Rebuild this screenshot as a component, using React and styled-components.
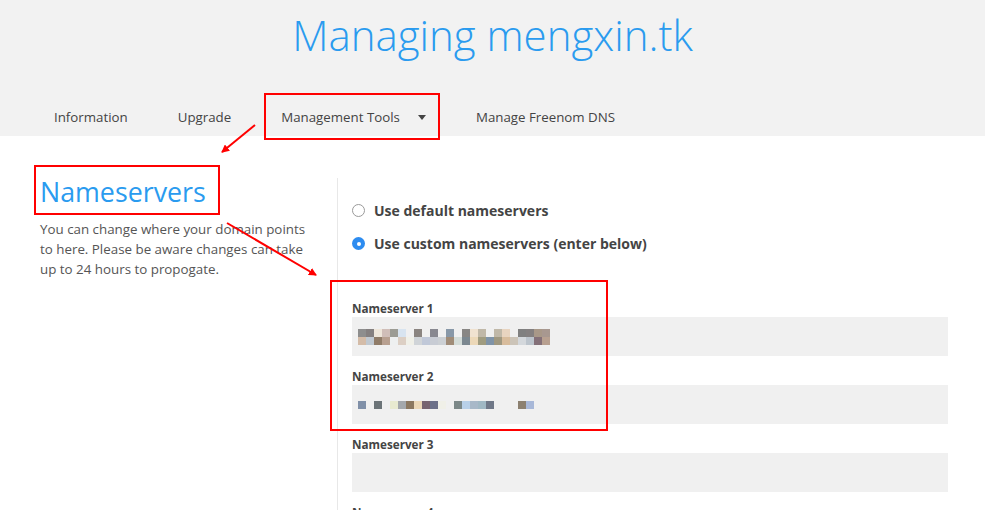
import React from "react";
import styled, { createGlobalStyle } from "styled-components";

const GlobalStyle = createGlobalStyle`
    html, body {
        margin: 0;
        padding: 0;
        background: #fff;
        font-family: "Open Sans", "Noto Sans", sans-serif;
        color: #555;
    }
`;

const Page = styled.div`
    position: relative;
    width: 985px;
    height: 510px;
    overflow: hidden;
`;

const Header = styled.header`
    background-color: #f2f2f2;
    height: 136px;
    display: flex;
    flex-direction: column;
`;

const Title = styled.h1`
    margin: 5px 0 0;
    text-align: center;
    font-size: 42px;
    font-weight: 300;
    line-height: 60px;
    color: #2a9bef;
`;

const Nav = styled.nav`
    display: flex;
    align-items: center;
    margin-top: auto;
    height: 38px;
    padding: 0 0 0 29px;
`;

const NavItem = styled.a`
    display: flex;
    align-items: center;
    padding: 0 25px;
    font-size: 13.3px;
    color: #444;
    text-decoration: none;
    white-space: nowrap;
`;

const Caret = styled.span`
    margin-left: 18px;
    width: 0;
    height: 0;
    border-left: 4.5px solid transparent;
    border-right: 4.5px solid transparent;
    border-top: 5px solid #444;
`;

const Main = styled.main`
    display: flex;
    padding: 42px 37px 0 0;
`;

const Side = styled.aside`
    width: 337px;
    flex-shrink: 0;
    padding-left: 40px;
    box-sizing: border-box;
`;

const SectionTitle = styled.h2`
    margin: -5px 0 0;
    font-size: 26.8px;
    font-weight: 400;
    line-height: 38px;
    color: #2a9bef;
`;

const Intro = styled.p`
    margin: 8px 0 0;
    width: 275px;
    font-size: 13.35px;
    line-height: 20px;
    color: #555;
`;

const Content = styled.section`
    flex: 1;
    border-left: 1px solid #e8e8e8;
    padding: 16px 0 0 14px;
    min-height: 340px;
`;

const RadioRow = styled.label`
    display: flex;
    align-items: center;
    height: 33px;
    font-size: 14px;
    font-weight: 700;
    color: #444;
`;

const Radio = styled.span`
    width: 13px;
    height: 13px;
    box-sizing: border-box;
    border-radius: 50%;
    margin-right: 9px;
    border: ${p => (p.checked ? "none" : "1px solid #9a9a9a")};
    background: ${p => (p.checked ? "#2d8cf0" : "#fff")};
    display: flex;
    align-items: center;
    justify-content: center;

    &::after {
        content: "";
        display: ${p => (p.checked ? "block" : "none")};
        width: 4px;
        height: 4px;
        border-radius: 50%;
        background: #fff;
    }
`;

const Fields = styled.div`
    margin-top: 41px;
    display: flex;
    flex-direction: column;
    gap: 13px;
`;

const Field = styled.div`
    display: flex;
    flex-direction: column;
`;

const FieldLabel = styled.span`
    font-size: 11.7px;
    font-weight: 700;
    line-height: 14px;
    color: #444;
    margin-bottom: 2px;
`;

const Input = styled.div`
    height: 39px;
    background: #f0f0f0;
    display: flex;
    align-items: center;
    padding-left: 6px;
`;

const Overlay = styled.svg`
    position: absolute;
    top: 0;
    left: 0;
    pointer-events: none;
`;

const ns1Top = [
    "#8e8e8e", "#858080", "#eee6da", "#d0beb8", "#9c9c94", "#d8e4f0", null, "#8a8480", null, "#888890",
    null, "#8898a8", null, "#888684", "#f0e2d0", "#c0b8a8", null, "#c0b8a8", "#e8d4c0", null,
    "#808080", "#848080", "#a89888", "#a89890",
];
const ns1Bottom = [
    "#d4bca8", "#c0c8d0", "#907c68", "#b8a090", "#eef0f0", "#dccfc4", "#f0f0e8", "#d0d4d8", "#c0c8d8", "#c8ccd4",
    "#ccd0d4", "#a08c78", "#d4dcd8", "#7c8890", "#ecd8b8", "#a09c80", "#8094a8", "#a09880", "#d8bc9c", "#ccc4b8",
    "#d4d8dc", "#bcc4cc", "#847078", "#b8a090",
];
const ns2Row = [
    "#8090a8", null, "#6c7478", null, "#e8ead0", "#a4a8ac", "#8c7860", "#ecd8b8", "#786470", "#6c7088",
    "#f0f0e8", null, "#7c8888", "#b8d0e8", "#a8b8c8", "#a0b8c4", "#707888", null, null, null,
    "#8c8070", "#a8b8d8",
];

// pixelated (censored) server names
const Blur = ({ rows }) => (
    <svg width="192" height={rows.length * 8} aria-hidden="true">
        {rows.map((row, r) =>
            row.map((c, i) =>
                c ? <rect key={r + "-" + i} x={i * 8} y={r * 8} width="8" height="8" fill={c} /> : null
            )
        )}
    </svg>
);

const Annotations = () => (
    <Overlay width="985" height="510" viewBox="0 0 985 510">
        <defs>
            <marker id="head" markerWidth="8" markerHeight="8" refX="7" refY="4" orient="auto" markerUnits="userSpaceOnUse">
                <path d="M0,0 L8,4 L0,8 Z" fill="#f00" />
            </marker>
        </defs>
        <g fill="none" stroke="#f00" strokeWidth="2">
            <rect x="265" y="94" width="174" height="45" />
            <rect x="35" y="166" width="184" height="48" />
            <rect x="331" y="281" width="276" height="149" />
            <line x1="255" y1="125" x2="222" y2="152" markerEnd="url(#head)" />
            <line x1="227" y1="223" x2="316" y2="275" markerEnd="url(#head)" />
        </g>
    </Overlay>
);

const App = () => {
    return (
        <Page>
            <GlobalStyle />
            <Header>
                <Title>Managing mengxin.tk</Title>
                <Nav>
                    <NavItem href="#">Information</NavItem>
                    <NavItem href="#">Upgrade</NavItem>
                    <NavItem href="#">Management Tools<Caret /></NavItem>
                    <NavItem href="#">Manage Freenom DNS</NavItem>
                </Nav>
            </Header>
            <Main>
                <Side>
                    <SectionTitle>Nameservers</SectionTitle>
                    <Intro>
                        You can change where your domain points to here. Please be aware changes can take up to 24 hours to propogate.
                    </Intro>
                </Side>
                <Content>
                    <RadioRow><Radio />Use default nameservers</RadioRow>
                    <RadioRow><Radio checked />Use custom nameservers (enter below)</RadioRow>
                    <Fields>
                        <Field>
                            <FieldLabel>Nameserver 1</FieldLabel>
                            <Input><Blur rows={[ns1Top, ns1Bottom]} /></Input>
                        </Field>
                        <Field>
                            <FieldLabel>Nameserver 2</FieldLabel>
                            <Input><Blur rows={[ns2Row]} /></Input>
                        </Field>
                        <Field>
                            <FieldLabel>Nameserver 3</FieldLabel>
                            <Input />
                        </Field>
                        <Field>
                            <FieldLabel>Nameserver 4</FieldLabel>
                            <Input />
                        </Field>
                    </Fields>
                </Content>
            </Main>
            <Annotations />
        </Page>
    );
};

export default App;
